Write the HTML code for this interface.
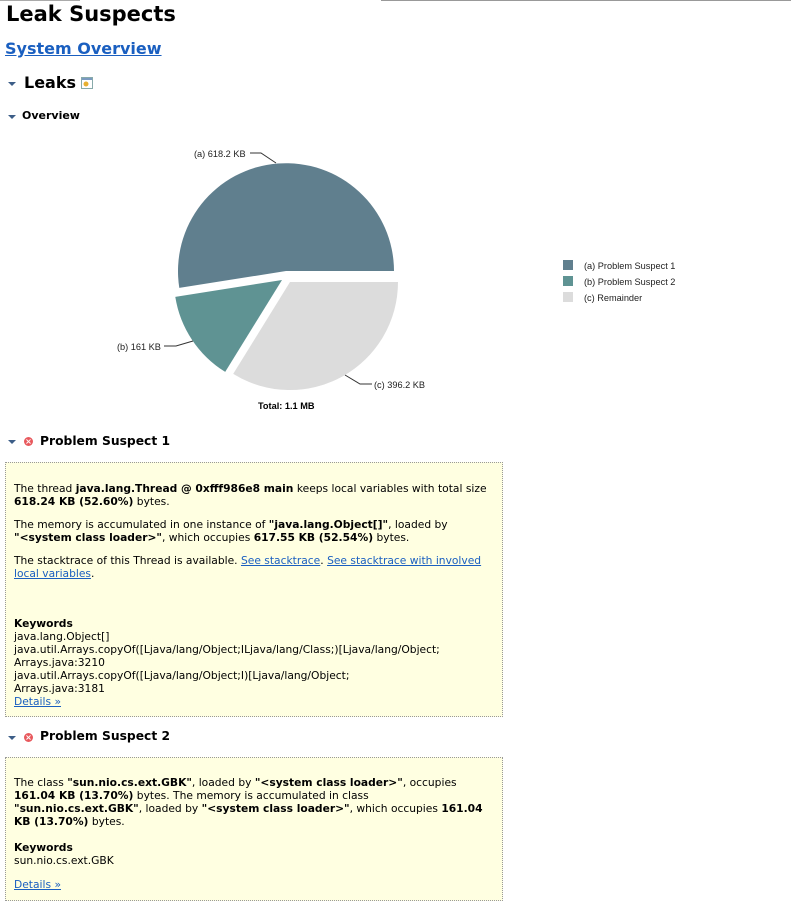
<!DOCTYPE html>
<html><head><meta charset="utf-8">
<style>
*{margin:0;padding:0}
body{width:791px;height:906px;background:#fff;position:relative;overflow:hidden;font-family:"DejaVu Sans","Liberation Sans",sans-serif;font-size:10.7px;color:#000}
.a{position:absolute;white-space:nowrap}
a{color:#1a5fc0;text-decoration:underline}
.tri{position:absolute;width:0;height:0;border-left:4px solid transparent;border-right:4px solid transparent;border-top:4px solid #3c5d87}
.box{position:absolute;left:5px;width:496px;background:#ffffe1;border:1px dotted #999}
.x{position:absolute;width:9px;height:9px;border-radius:50%;background:#e8595d;color:#fff;font-size:8px;line-height:9px;text-align:center;font-weight:bold}
b{font-weight:bold}
.t{line-height:13px}
</style></head><body>
<div style="position:absolute;left:0;top:0;width:80px;height:1px;background:#aaa"></div>
<div style="position:absolute;left:381px;top:0;width:410px;height:1px;background:#999"></div>
<div class="a" style="left:6px;top:0px;font-size:21px;font-weight:bold;line-height:28px">Leak Suspects</div>
<div class="a" style="left:5px;top:37px;font-size:16px;font-weight:bold;line-height:24px"><a href="#">System Overview</a></div>
<div class="tri" style="left:8px;top:82px"></div>
<div class="a" style="left:24px;top:72px;font-size:16px;font-weight:bold;line-height:22px">Leaks</div>
<svg class="a" style="left:81px;top:77px" width="12" height="12"><rect x="0.5" y="0.5" width="11" height="11" fill="#fff" stroke="#8aa"/><rect x="1" y="1" width="10" height="2" fill="#7a9ac0"/><circle cx="5" cy="7" r="2.5" fill="#e8b030"/></svg>
<div class="tri" style="left:8px;top:115px"></div>
<div class="a" style="left:22px;top:109px;font-size:11px;font-weight:bold;line-height:14px">Overview</div>

<svg class="a" style="left:0;top:130px" width="791" height="290" viewBox="0 130 791 290">
<path d="M286,271 L394,271 A108,108 0 1 0 179.3,287.9 Z" fill="#607f8e"/>
<path d="M282,280 L175.3,296.9 A108,108 0 0 0 225.2,371.9 Z" fill="#5f9393"/>
<path d="M290,282 L233.2,373.9 A108,108 0 0 0 398,282 Z" fill="#dcdcdc"/>
<path d="M250,153 H261 L276,163" stroke="#333" fill="none" stroke-width="1"/>
<path d="M164,346 H176 L193,341" stroke="#333" fill="none"/>
<path d="M345,375 L360,384 H372" stroke="#333" fill="none"/>
<g font-family="Liberation Sans,sans-serif" font-size="9.2" fill="#222">
<text x="194" y="157">(a)  618.2 KB</text>
<text x="117" y="350">(b)  161 KB</text>
<text x="374" y="388">(c)  396.2 KB</text>
<text x="258" y="409" font-weight="bold" fill="#000">Total: 1.1 MB</text>
<rect x="563" y="260" width="10" height="10" fill="#607f8e"/>
<rect x="563" y="276" width="10" height="10" fill="#5f9393"/>
<rect x="563" y="292" width="10" height="10" fill="#dcdcdc"/>
<text x="584" y="269">(a)  Problem Suspect 1</text>
<text x="584" y="285">(b)  Problem Suspect 2</text>
<text x="584" y="301">(c)  Remainder</text>
</g></svg>

<div class="tri" style="left:8px;top:440px"></div>
<div class="x" style="left:24px;top:437px">×</div>
<div class="a" style="left:40px;top:433px;font-size:12.3px;font-weight:bold;line-height:17px">Problem Suspect 1</div>
<div class="box" style="top:462px;height:253px"></div>
<div class="a t" style="left:14px;top:482px">The thread <b>java.lang.Thread @ 0xfff986e8 main</b> keeps local variables with total size</div>
<div class="a t" style="left:14px;top:495px"><b>618.24 KB (52.60%)</b> bytes.</div>
<div class="a t" style="left:14px;top:518px">The memory is accumulated in one instance of <b>"java.lang.Object[]"</b>, loaded by</div>
<div class="a t" style="left:14px;top:531px"><b>"&lt;system class loader&gt;"</b>, which occupies <b>617.55 KB (52.54%)</b> bytes.</div>
<div class="a t" style="left:14px;top:554px">The stacktrace of this Thread is available. <a href="#">See stacktrace</a>. <a href="#">See stacktrace with involved</a></div>
<div class="a t" style="left:14px;top:567px"><a href="#">local variables</a>.</div>
<div class="a t" style="left:14px;top:617px"><b>Keywords</b></div>
<div class="a t" style="left:14px;top:630px">java.lang.Object[]</div>
<div class="a t" style="left:14px;top:643px">java.util.Arrays.copyOf([Ljava/lang/Object;ILjava/lang/Class;)[Ljava/lang/Object;</div>
<div class="a t" style="left:14px;top:656px">Arrays.java:3210</div>
<div class="a t" style="left:14px;top:669px">java.util.Arrays.copyOf([Ljava/lang/Object;I)[Ljava/lang/Object;</div>
<div class="a t" style="left:14px;top:682px">Arrays.java:3181</div>
<div class="a t" style="left:14px;top:695px"><a href="#">Details »</a></div>

<div class="tri" style="left:8px;top:736px"></div>
<div class="x" style="left:24px;top:733px">×</div>
<div class="a" style="left:40px;top:728px;font-size:12.3px;font-weight:bold;line-height:17px">Problem Suspect 2</div>
<div class="box" style="top:757px;height:142px"></div>
<div class="a t" style="left:14px;top:776px">The class <b>"sun.nio.cs.ext.GBK"</b>, loaded by <b>"&lt;system class loader&gt;"</b>, occupies</div>
<div class="a t" style="left:14px;top:789px"><b>161.04 KB (13.70%)</b> bytes. The memory is accumulated in class</div>
<div class="a t" style="left:14px;top:802px"><b>"sun.nio.cs.ext.GBK"</b>, loaded by <b>"&lt;system class loader&gt;"</b>, which occupies <b>161.04</b></div>
<div class="a t" style="left:14px;top:815px"><b>KB (13.70%)</b> bytes.</div>
<div class="a t" style="left:14px;top:841px"><b>Keywords</b></div>
<div class="a t" style="left:14px;top:854px">sun.nio.cs.ext.GBK</div>
<div class="a t" style="left:14px;top:878px"><a href="#">Details »</a></div>
</body></html>
